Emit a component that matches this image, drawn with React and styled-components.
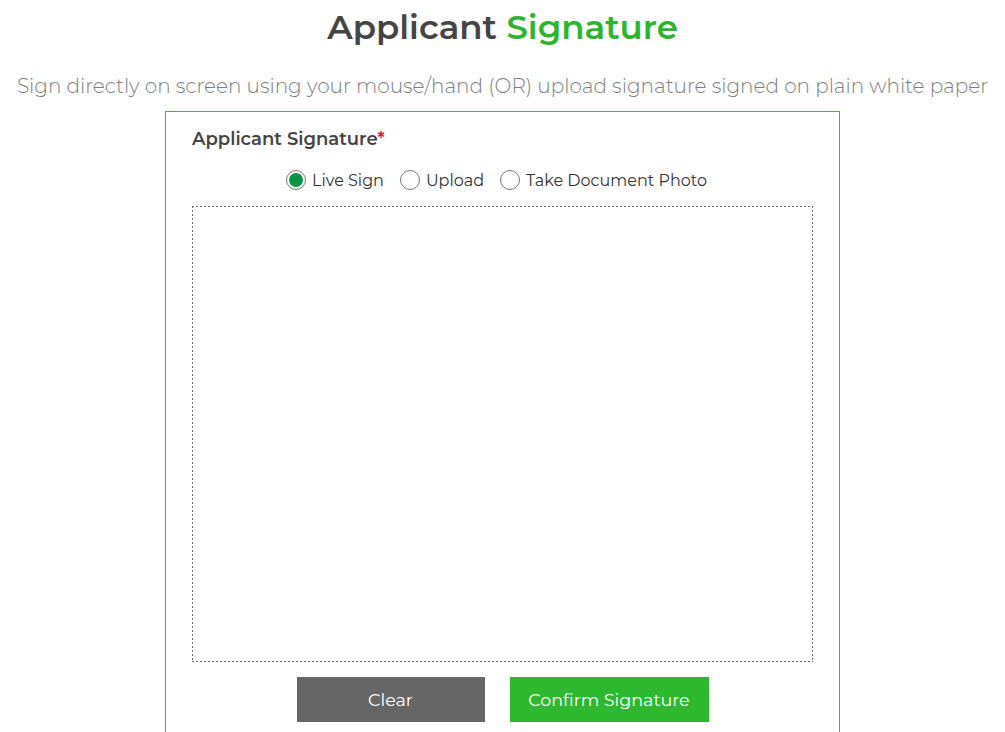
import React, { useState } from 'react';
import styled, { createGlobalStyle } from 'styled-components';

const GlobalStyle = createGlobalStyle`
  body {
    margin: 0;
    background: #fff;
    font-family: "Montserrat", "Inter", "DejaVu Sans", sans-serif;
  }
`;

const Page = styled.div`
  display: flex;
  flex-direction: column;
  align-items: center;
  padding-top: 7px;
`;

const Title = styled.h1`
  margin: 0;
  font-size: 34px;
  font-weight: 600;
  color: #454545;
  line-height: 40px;

  span {
    color: #2eb52f;
  }
`;

const Subtitle = styled.p`
  margin: 26px 0 0;
  font-size: 20px;
  font-weight: 300;
  color: #7d7d7d;
  line-height: 26px;
`;

const Card = styled.div`
  margin-top: 12px;
  width: 675px;
  box-sizing: border-box;
  border: 1px solid #4caf4a;
  border-bottom: none;
  padding: 16px 26px 10px 26px;
`;

const Label = styled.div`
  font-size: 18px;
  font-weight: 600;
  color: #444;

  span {
    color: #d0273a;
  }
`;

const RadioRow = styled.div`
  display: flex;
  justify-content: center;
  gap: 16px;
  margin-top: 20px;
  padding-right: 12px;
`;

const RadioOption = styled.label`
  display: flex;
  align-items: center;
  gap: 6px;
  font-size: 16px;
  color: #333;
  cursor: pointer;
`;

const RadioCircle = styled.span`
  width: 20px;
  height: 20px;
  border-radius: 50%;
  border: 1px solid #777;
  box-sizing: border-box;
  display: flex;
  align-items: center;
  justify-content: center;
  background: #fff;

  &::after {
    content: '';
    width: 14px;
    height: 14px;
    border-radius: 50%;
    background: ${p => (p.$checked ? '#0b9346' : 'transparent')};
  }
`;

const SignPad = styled.div`
  margin-top: 16px;
  height: 456px;
  background-image:
    repeating-linear-gradient(90deg, #6a6a6a 0 2px, transparent 2px 4px),
    repeating-linear-gradient(90deg, #6a6a6a 0 2px, transparent 2px 4px),
    repeating-linear-gradient(180deg, #6a6a6a 0 2px, transparent 2px 4px),
    repeating-linear-gradient(180deg, #6a6a6a 0 2px, transparent 2px 4px);
  background-size: 100% 1px, 100% 1px, 1px 100%, 1px 100%;
  background-position: top left, bottom left, top left, top right;
  background-repeat: no-repeat;
`;

const Buttons = styled.div`
  display: flex;
  justify-content: center;
  gap: 25px;
  margin-top: 15px;
`;

const Button = styled.button`
  height: 45px;
  width: ${p => p.$width}px;
  border: none;
  color: #fff;
  font-family: "Montserrat", "Inter", sans-serif;
  font-size: 17.5px;
  background: ${p => (p.$primary ? '#2eb82f' : '#666666')};
  cursor: pointer;
`;

const options = ['Live Sign', 'Upload', 'Take Document Photo'];

export default function App() {
  const [mode, setMode] = useState('Live Sign');

  return (
    <Page>
      <GlobalStyle />
      <Title>
        Applicant <span>Signature</span>
      </Title>
      <Subtitle>
        Sign directly on screen using your mouse/hand (OR) upload signature signed on plain white paper
      </Subtitle>
      <Card>
        <Label>
          Applicant Signature<span>*</span>
        </Label>
        <RadioRow>
          {options.map(o => (
            <RadioOption key={o} onClick={() => setMode(o)}>
              <RadioCircle $checked={mode === o} />
              {o}
            </RadioOption>
          ))}
        </RadioRow>
        <SignPad />
        <Buttons>
          <Button $width={188}>Clear</Button>
          <Button $width={199} $primary>Confirm Signature</Button>
        </Buttons>
      </Card>
    </Page>
  );
}
